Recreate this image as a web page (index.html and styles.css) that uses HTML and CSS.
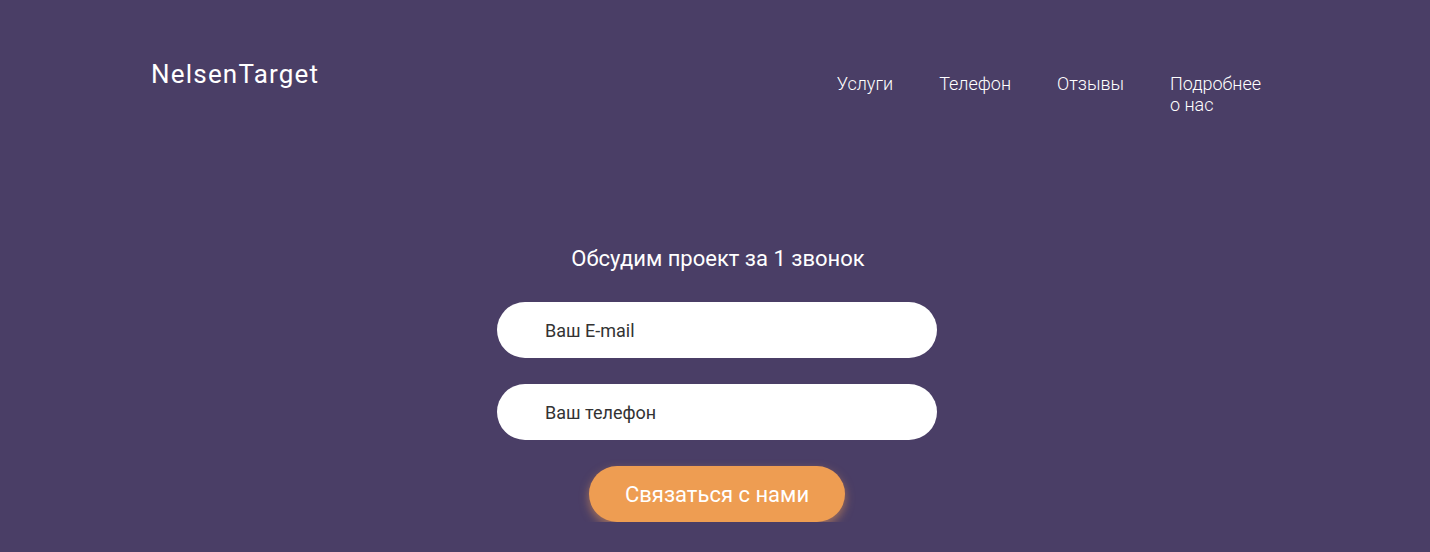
FILE: index.html
```html
<!DOCTYPE html>
<html lang="ru">
<head>
    <meta charset="UTF-8">
    <meta name="viewport" content="width=device-width, initial-scale=1.0">
    <title>NelsenTarget</title>
    <link rel="stylesheet" href="styles.css">
</head>
<body>
    <header class="header">
        <div class="logo">NelsenTarget</div>
        <nav class="nav">
            <a href="#" class="nav-link">Услуги</a>
            <a href="#" class="nav-link">Телефон</a>
            <a href="#" class="nav-link">Отзывы</a>
            <a href="#" class="nav-link nav-link-wrap">Подробнее о нас</a>
        </nav>
    </header>
    <main class="contact">
        <h2 class="contact-title">Обсудим проект за 1 звонок</h2>
        <form class="contact-form">
            <input type="email" class="field" placeholder="Ваш E-mail">
            <input type="tel" class="field" placeholder="Ваш телефон">
            <button type="button" class="btn">Связаться с нами</button>
        </form>
    </main>
</body>
</html>
```

FILE: styles.css
```css
body {
    margin: 0;
    padding: 0;
    background-color: #4a3e66;
    color: #fff;
    font-family: 'Roboto', 'Liberation Sans', sans-serif;
}
.header {
    display: flex;
    justify-content: space-between;
    align-items: flex-start;
    padding: 58px 151px 0 151px;
}
.logo {
    font-size: 26px;
    letter-spacing: 1.2px;
    line-height: 32px;
}
.nav {
    display: flex;
    gap: 46px;
    padding-top: 15px;
    padding-right: 14px;
}
.nav-link {
    color: #fff;
    text-decoration: none;
    font-size: 18px;
    font-weight: 300;
    line-height: 21px;
}
.nav-link-wrap {
    width: 95px;
}
.contact {
    display: flex;
    flex-direction: column;
    align-items: center;
    padding-top: 131px;
    padding-left: 6px;
}
.contact-title {
    margin: 0 0 30px 0;
    font-size: 22px;
    font-weight: 400;
    line-height: 26px;
}
.contact-form {
    display: flex;
    flex-direction: column;
    align-items: center;
    gap: 26px;
    margin-left: -2px;
}
.field {
    box-sizing: border-box;
    width: 440px;
    height: 56px;
    border: none;
    border-radius: 28px;
    padding: 0 0 0 48px;
    font-family: inherit;
    font-size: 18px;
    color: #333;
    outline: none;
}
.field::placeholder {
    color: #333;
}
.btn {
    width: 256px;
    height: 56px;
    border: none;
    border-radius: 28px;
    background: #ee9d52;
    color: #fff;
    font-family: inherit;
    font-size: 22px;
    cursor: pointer;
    box-shadow: 0 4px 10px rgba(238, 157, 82, 0.55);
}
```
